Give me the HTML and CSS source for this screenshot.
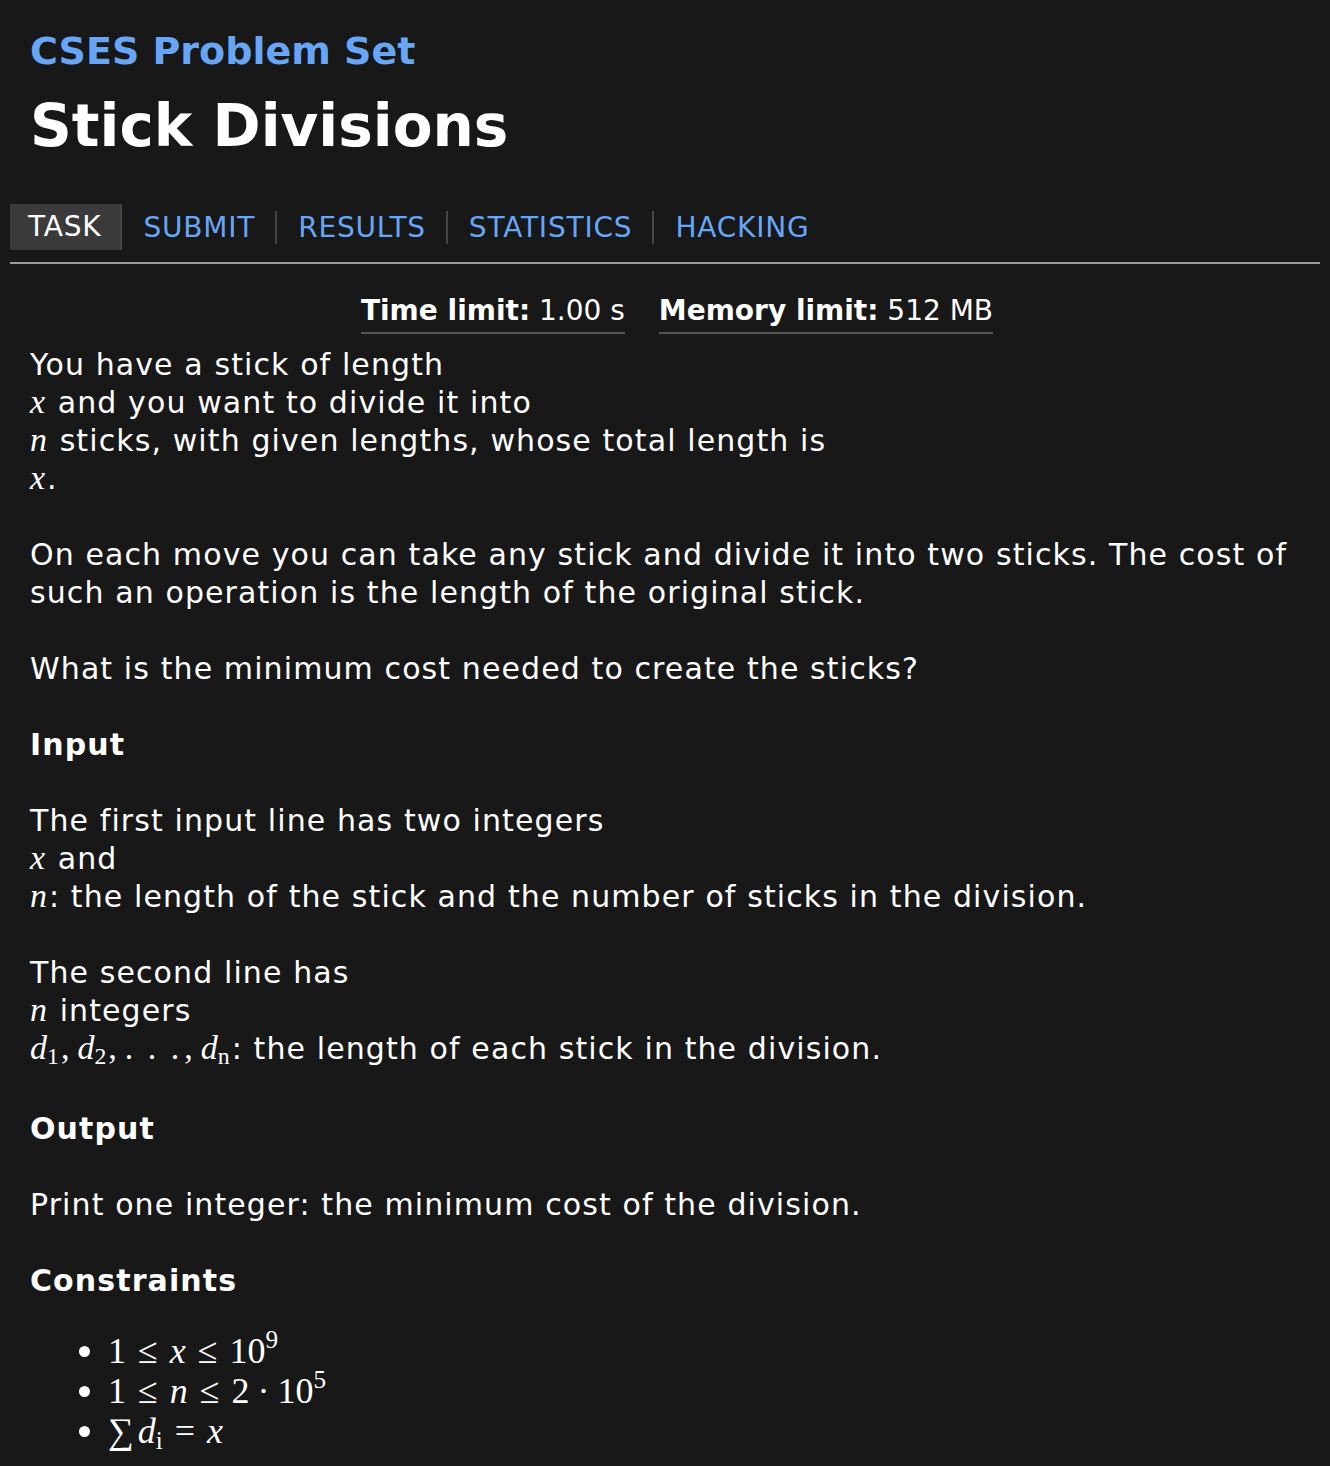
FILE: index.html
```html
<!DOCTYPE html>
<html>
<head>
<meta charset="utf-8">
<title>Stick Divisions</title>
<link rel="stylesheet" href="styles.css">
</head>
<body>
<div class="page">
  <header class="header">
    <a class="site" href="#">CSES Problem Set</a>
    <h1 class="title">Stick Divisions</h1>
  </header>
  <nav class="nav">
    <a class="tab current" href="#">TASK</a>
    <a class="tab" href="#">SUBMIT</a>
    <a class="tab" href="#">RESULTS</a>
    <a class="tab" href="#">STATISTICS</a>
    <a class="tab last" href="#">HACKING</a>
  </nav>
  <main class="content">
    <div class="meta">
      <span class="meta-item"><b>Time limit:</b> 1.00 s</span>
      <span class="meta-item"><b>Memory limit:</b> 512 MB</span>
    </div>
    <p class="first">You have a stick of length<br><span class="m">x</span> and you want to divide it into<br><span class="m">n</span> sticks, with given lengths, whose total length is<br><span class="m">x</span>.</p>
    <p>On each move you can take any stick and divide it into two sticks. The cost of such an operation is the length of the original stick.</p>
    <p>What is the minimum cost needed to create the sticks?</p>
    <h2>Input</h2>
    <p>The first input line has two integers<br><span class="m">x</span> and<br><span class="m">n</span>: the length of the stick and the number of sticks in the division.</p>
    <p class="tall">The second line has<br><span class="m">n</span> integers<br><span class="m">d<sub>1</sub><span class="r comma">,</span>d<sub>2</sub><span class="r comma">,</span><span class="r dots">. . .</span><span class="r comma">,</span>d<sub>n</sub></span>: the length of each stick in the division.</p>
    <h2>Output</h2>
    <p>Print one integer: the minimum cost of the division.</p>
    <h2>Constraints</h2>
    <ul class="constraints">
      <li><span class="m big"><span class="r">1</span><span class="r op">≤</span>x<span class="r op">≤</span><span class="r">10<sup>9</sup></span></span></li>
      <li><span class="m big"><span class="r">1</span><span class="r op">≤</span>n<span class="r op">≤</span><span class="r">2<span class="dot">·</span>10<sup>5</sup></span></span></li>
      <li><span class="m big"><span class="r sum">∑</span>d<sub>i</sub><span class="r op">=</span>x</span></li>
    </ul>
  </main>
</div>
</body>
</html>
```

FILE: styles.css
```css
html, body {
  margin: 0;
  padding: 0;
  background: #181818;
}
body {
  color: #ffffff;
  font-family: "DejaVu Sans", Verdana, sans-serif;
  font-size: 30px;
  line-height: 38px;
}
.page {
  padding: 0 10px;
}
.header {
  padding: 26px 20px 0 20px;
}
.site {
  display: block;
  color: #67a6f7;
  text-decoration: none;
  font-weight: bold;
  font-size: 38px;
  line-height: 50px;
}
.title {
  margin: 14px 0 0 0;
  font-size: 58px;
  line-height: 72px;
  font-weight: bold;
}
.nav {
  display: flex;
  align-items: center;
  margin-top: 42px;
  padding-bottom: 12px;
  border-bottom: 2px solid #9a9a9a;
  font-size: 28px;
  letter-spacing: 0.8px;
}
.tab {
  color: #67a6f7;
  text-decoration: none;
  padding: 0 20px 0 21px;
  line-height: 33px;
  border-right: 2px solid #444444;
}
.tab.last {
  border-right: none;
}
.tab.current {
  color: #ffffff;
  background: #3a3a3a;
  line-height: 46px;
  padding: 0 19px 0 18px;
}
.content {
  padding: 0 20px;
}
.meta {
  display: flex;
  justify-content: center;
  gap: 34px;
  padding-left: 24px;
  margin-top: 28px;
  font-size: 28px;
}
.meta-item {
  border-bottom: 2px solid #555555;
  padding-bottom: 2px;
}
p {
  margin: 0 0 38px 0;
  letter-spacing: 1.1px;
}
p.first {
  margin-top: 12px;
}
p.tall {
  margin-bottom: 42px;
}
h2 {
  font-size: 30px;
  line-height: 38px;
  margin: 0 0 38px 0;
  letter-spacing: 1.1px;
}
.m {
  font-family: "Liberation Serif", "Times New Roman", serif;
  font-style: italic;
  font-size: 34px;
  line-height: 1;
  letter-spacing: 0;
  padding-right: 2px;
}
.m sub {
  font-style: normal;
  font-size: 0.7em;
  line-height: 0;
  vertical-align: -0.22em;
}
.m sup {
  font-size: 0.7em;
  line-height: 0;
  vertical-align: 0.6em;
}
.r {
  font-style: normal;
}
.comma {
  padding: 0 8px 0 2px;
}
.dots {
  letter-spacing: 3px;
}
.op {
  padding: 0 12px;
  line-height: 0;
}
.dot {
  padding: 0 8px;
}
.sum {
  line-height: 0;
  padding-right: 4px;
}
.constraints {
  margin: 0;
  padding-left: 78px;
  margin-top: -7px;
}
.constraints li {
  height: 40px;
  line-height: 40px;
}
.constraints li::marker {
  font-size: 36px;
}
.m.big {
  font-size: 36px;
}
```
